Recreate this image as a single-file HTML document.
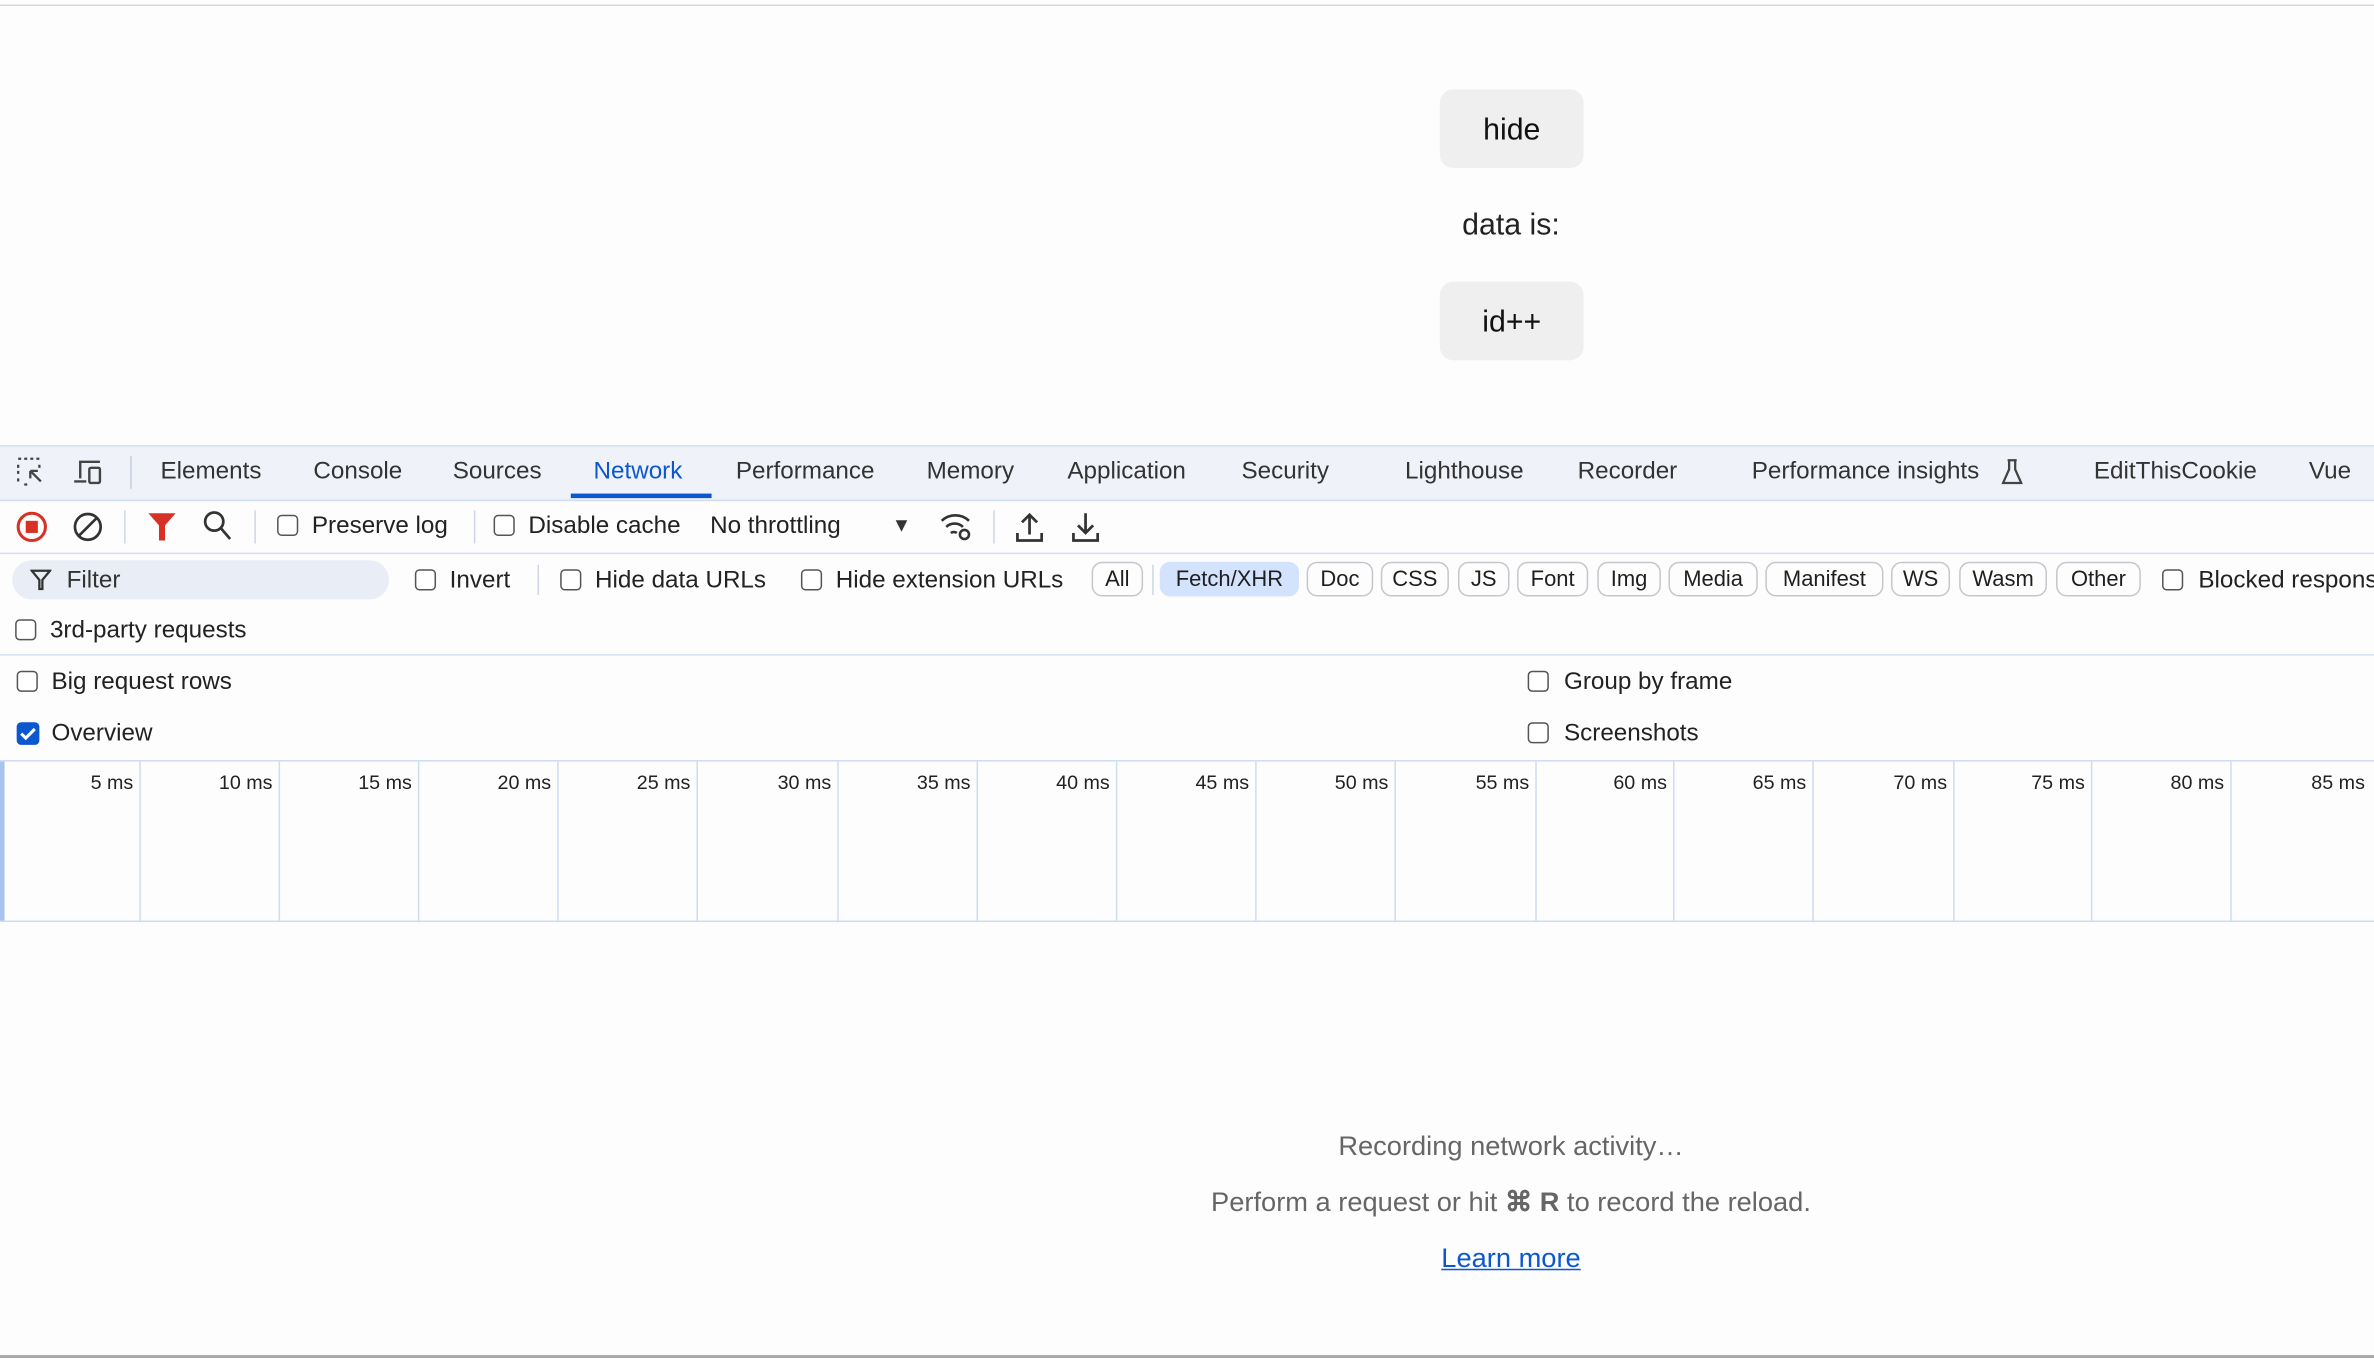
<!DOCTYPE html>
<html><head><meta charset="utf-8"><style>
html,body{margin:0;padding:0;width:2374px;height:1358px;overflow:hidden;background:#fff}
#w{position:absolute;left:0;top:0;width:1568px;height:897px;transform:scale(1.51403);transform-origin:0 0;font-family:"Liberation Sans",sans-serif;color:#1f1f1f;background:#fdfdfd}
.a{position:absolute;white-space:nowrap}
.btn{position:absolute;background:#efefef;border-radius:9px;font-size:20px;text-align:center;color:#111}
.tab{position:absolute;top:303px;font-size:16px;color:#333;white-space:nowrap}
.cb{position:absolute;width:12px;height:12px;border:1.5px solid #555;border-radius:3px;background:#fff}
.lbl{position:absolute;font-size:16px;color:#222;white-space:nowrap;margin-top:1px}
.pill{position:absolute;top:371px;height:23px;border:1px solid #c4c7cc;border-radius:7px;font-size:14.5px;line-height:23px;text-align:center;color:#1f1f1f;box-sizing:border-box}
.vl{position:absolute;top:503px;height:106px;width:1px;background:#cfdcf1}
.tl{position:absolute;top:509px;font-size:13px;color:#222;text-align:right;width:60px}
</style></head><body><div id="w">
<div class="a" style="left:0;top:3px;width:1568px;height:1px;background:#d8d8d8"></div>
<div class="btn" style="left:951px;top:59px;width:95px;height:52px;line-height:54px">hide</div>
<div class="a" style="left:900px;width:196px;text-align:center;top:138px;font-size:20px;color:#222">data is:</div>
<div class="btn" style="left:951px;top:186px;width:95px;height:52px;line-height:54px">id++</div>

<div class="a" style="left:0;top:294px;width:1568px;height:35px;background:#eff3f9;border-top:1px solid #d6dfec;border-bottom:1px solid #d0dcef"></div>
<svg class="a" style="left:11px;top:302px" width="22" height="20" viewBox="0 0 22 20" fill="none" stroke="#444" stroke-width="1.5"><path d="M1 1h2M5 1h2M9 1h2M13 1h2M1 5v2M1 9v2M15 5v2M1 14v2M5 18h2" stroke-dasharray="2 2"/><path d="M9 9l7 7M9 9h5M9 9v5"/></svg>
<svg class="a" style="left:48px;top:302px" width="22" height="20" viewBox="0 0 22 20" fill="none" stroke="#444" stroke-width="1.6"><path d="M5 14V3h13M1 16h8"/><rect x="11" y="7" width="7" height="10" rx="1"/></svg>
<div class="a" style="left:86px;top:301px;width:1px;height:22px;background:#c8d0dc"></div>
<div class="tab" style="left:106px">Elements</div>
<div class="tab" style="left:207px">Console</div>
<div class="tab" style="left:299px">Sources</div>
<div class="tab" style="left:392px;color:#0b57d0">Network</div>
<div class="a" style="left:377px;top:326px;width:93px;height:3px;background:#0b57d0"></div>
<div class="tab" style="left:486px">Performance</div>
<div class="tab" style="left:612px">Memory</div>
<div class="tab" style="left:705px">Application</div>
<div class="tab" style="left:820px">Security</div>
<div class="tab" style="left:928px">Lighthouse</div>
<div class="tab" style="left:1042px">Recorder</div>
<div class="tab" style="left:1157px">Performance insights</div>
<svg class="a" style="left:1322px;top:303px" width="14" height="18" viewBox="0 0 14 18" fill="none" stroke="#444" stroke-width="1.5"><path d="M4 1h6M5 1v6L1 16h12L9 7V1"/></svg>
<div class="tab" style="left:1383px">EditThisCookie</div>
<div class="tab" style="left:1525px">Vue</div>

<svg class="a" style="left:10px;top:337px" width="22" height="22" viewBox="0 0 22 22"><circle cx="11" cy="11" r="9" fill="none" stroke="#d93025" stroke-width="2"/><rect x="7" y="7" width="8" height="8" fill="#d93025"/></svg>
<svg class="a" style="left:47px;top:337px" width="22" height="22" viewBox="0 0 22 22" fill="none" stroke="#333" stroke-width="1.8"><circle cx="11" cy="11" r="8.5"/><path d="M5 17L17 5"/></svg>
<div class="a" style="left:82px;top:337px;width:1px;height:22px;background:#d0d7e2"></div>
<svg class="a" style="left:97px;top:338px" width="20" height="20" viewBox="0 0 20 20"><path d="M1 1h18l-7 8v10h-4V9z" fill="#d93025"/></svg>
<svg class="a" style="left:134px;top:337px" width="20" height="22" viewBox="0 0 20 22" fill="none" stroke="#333" stroke-width="1.8"><circle cx="7.5" cy="7.5" r="6"/><path d="M12 12l6 7"/></svg>
<div class="a" style="left:168px;top:337px;width:1px;height:22px;background:#d0d7e2"></div>
<div class="cb" style="left:183px;top:340px"></div><div class="lbl" style="left:206px;top:338px">Preserve log</div>
<div class="a" style="left:313px;top:337px;width:1px;height:22px;background:#d0d7e2"></div>
<div class="cb" style="left:326px;top:340px"></div><div class="lbl" style="left:349px;top:338px">Disable cache</div>
<div class="lbl" style="left:469px;top:338px">No throttling</div>
<div class="a" style="left:589px;top:339px;font-size:13px;color:#333">▼</div>
<svg class="a" style="left:620px;top:337px" width="24" height="22" viewBox="0 0 24 22" fill="none" stroke="#333" stroke-width="1.7"><path d="M2 7a13 13 0 0 1 18 0M5 11a8 8 0 0 1 11 0M8 15a3.5 3.5 0 0 1 4 0"/><circle cx="17" cy="16" r="3"/></svg>
<div class="a" style="left:656px;top:337px;width:1px;height:22px;background:#d0d7e2"></div>
<svg class="a" style="left:670px;top:337px" width="20" height="22" viewBox="0 0 20 22" fill="none" stroke="#333" stroke-width="1.8"><path d="M10 16V3M5 8l5-5 5 5M2 15v5h16v-5"/></svg>
<svg class="a" style="left:707px;top:337px" width="20" height="22" viewBox="0 0 20 22" fill="none" stroke="#333" stroke-width="1.8"><path d="M10 2v13M5 10l5 5 5-5M2 15v5h16v-5"/></svg>
<div class="a" style="left:0;top:365px;width:1568px;height:1px;background:#d6e0f0"></div>

<div class="a" style="left:8px;top:370px;width:249px;height:26px;border-radius:13px;background:#e9eef6"></div>
<svg class="a" style="left:20px;top:376px" width="14" height="14" viewBox="0 0 14 14" fill="none" stroke="#333" stroke-width="1.5"><path d="M1 1h12L8 7v6H6V7z"/></svg>
<div class="lbl" style="left:44px;top:374px;color:#333">Filter</div>
<div class="cb" style="left:274px;top:376px"></div><div class="lbl" style="left:297px;top:374px">Invert</div>
<div class="a" style="left:355px;top:373px;width:1px;height:20px;background:#d0d7e2"></div>
<div class="cb" style="left:370px;top:376px"></div><div class="lbl" style="left:393px;top:374px">Hide data URLs</div>
<div class="cb" style="left:529px;top:376px"></div><div class="lbl" style="left:552px;top:374px">Hide extension URLs</div>
<div class="pill" style="left:721px;width:34px">All</div>
<div class="a" style="left:761px;top:373px;width:1px;height:20px;background:#d0d7e2"></div>
<div class="pill" style="left:766px;width:92px;background:#d3e3fd;border-color:#d3e3fd">Fetch/XHR</div>
<div class="pill" style="left:863px;width:44px">Doc</div>
<div class="pill" style="left:912px;width:45px">CSS</div>
<div class="pill" style="left:963px;width:34px">JS</div>
<div class="pill" style="left:1002px;width:47px">Font</div>
<div class="pill" style="left:1055px;width:42px">Img</div>
<div class="pill" style="left:1102px;width:59px">Media</div>
<div class="pill" style="left:1166px;width:78px">Manifest</div>
<div class="pill" style="left:1249px;width:39px">WS</div>
<div class="pill" style="left:1294px;width:58px">Wasm</div>
<div class="pill" style="left:1358px;width:56px">Other</div>
<div class="cb" style="left:1428px;top:376px"></div><div class="lbl" style="left:1452px;top:374px">Blocked response cookies</div>
<div class="cb" style="left:10px;top:409px"></div><div class="lbl" style="left:33px;top:407px">3rd-party requests</div>
<div class="a" style="left:0;top:432px;width:1568px;height:1px;background:#d6e0f0"></div>

<div class="cb" style="left:11px;top:443px"></div><div class="lbl" style="left:34px;top:441px">Big request rows</div>
<div class="a" style="left:11px;top:477px;width:15px;height:15px;border-radius:3px;background:#0b57d0"></div>
<svg class="a" style="left:11px;top:477px" width="15" height="15" viewBox="0 0 15 15" fill="none" stroke="#fff" stroke-width="2"><path d="M3 7.5l3 3 6-6"/></svg>
<div class="lbl" style="left:34px;top:475px">Overview</div>
<div class="cb" style="left:1009px;top:443px"></div><div class="lbl" style="left:1033px;top:441px">Group by frame</div>
<div class="cb" style="left:1009px;top:477px"></div><div class="lbl" style="left:1033px;top:475px">Screenshots</div>

<div class="a" style="left:0;top:502px;width:1568px;height:1px;background:#cfdcf1"></div>
<div class="a" style="left:0;top:608px;width:1568px;height:1px;background:#cfdcf1"></div>
<div class="a" style="left:0;top:503px;width:3px;height:105px;background:#a9c4ec"></div>
<div class="vl" style="left:92px"></div><div class="tl" style="left:28px">5 ms</div>
<div class="vl" style="left:184px"></div><div class="tl" style="left:120px">10 ms</div>
<div class="vl" style="left:276px"></div><div class="tl" style="left:212px">15 ms</div>
<div class="vl" style="left:368px"></div><div class="tl" style="left:304px">20 ms</div>
<div class="vl" style="left:460px"></div><div class="tl" style="left:396px">25 ms</div>
<div class="vl" style="left:553px"></div><div class="tl" style="left:489px">30 ms</div>
<div class="vl" style="left:645px"></div><div class="tl" style="left:581px">35 ms</div>
<div class="vl" style="left:737px"></div><div class="tl" style="left:673px">40 ms</div>
<div class="vl" style="left:829px"></div><div class="tl" style="left:765px">45 ms</div>
<div class="vl" style="left:921px"></div><div class="tl" style="left:857px">50 ms</div>
<div class="vl" style="left:1014px"></div><div class="tl" style="left:950px">55 ms</div>
<div class="vl" style="left:1105px"></div><div class="tl" style="left:1041px">60 ms</div>
<div class="vl" style="left:1197px"></div><div class="tl" style="left:1133px">65 ms</div>
<div class="vl" style="left:1290px"></div><div class="tl" style="left:1226px">70 ms</div>
<div class="vl" style="left:1381px"></div><div class="tl" style="left:1317px">75 ms</div>
<div class="vl" style="left:1473px"></div><div class="tl" style="left:1409px">80 ms</div>
<div class="tl" style="left:1502px">85 ms</div>

<div class="a" style="left:700px;width:596px;text-align:center;top:747px;font-size:18px;color:#666">Recording network activity…</div>
<div class="a" style="left:700px;width:596px;text-align:center;top:784px;font-size:18px;color:#666">Perform a request or hit <b>⌘ R</b> to record the reload.</div>
<div class="a" style="left:700px;width:596px;text-align:center;top:821px;font-size:18px;color:#0b57d0;text-decoration:underline">Learn more</div>
<div class="a" style="left:0;top:895px;width:1568px;height:2px;background:#aaa"></div>
</div></body></html>
